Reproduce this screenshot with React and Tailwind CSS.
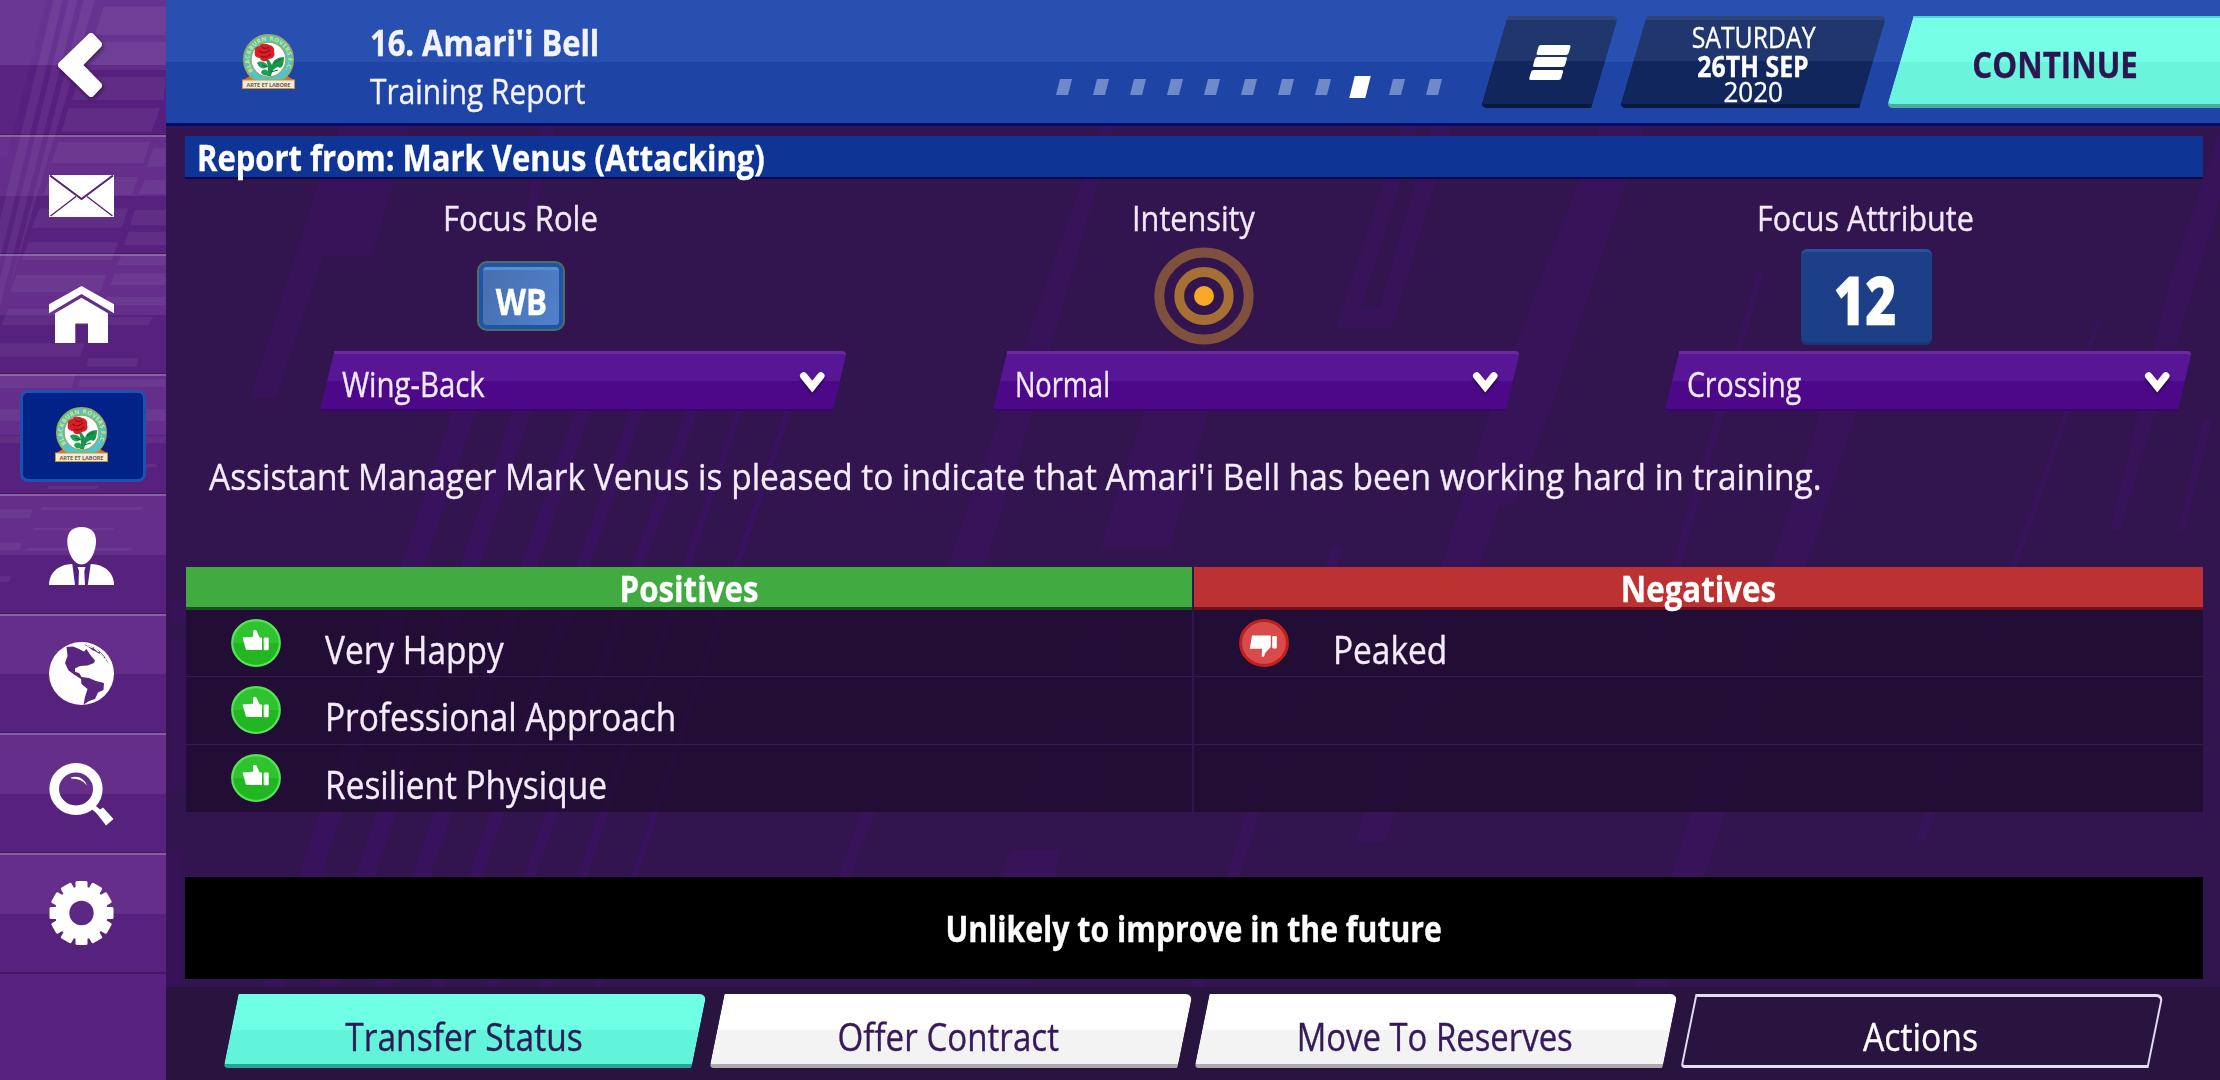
import { useId } from 'react';

const positives = ['Very Happy', 'Professional Approach', 'Resilient Physique'];
const negatives = ['Peaked', '', ''];
const pages = [0, 1, 2, 3, 4, 5, 6, 7, 8, 9, 10];
const activePage = 8;

const Crest = () => {
  const ringId = useId();
  return (
    <svg width="53" height="55" viewBox="0 0 53 55" className="overflow-visible">
      <path d="M1 46 L8 42 H45 L52 46 Z" fill="#e0662c" />
      <circle cx="26.5" cy="25.5" r="24.8" fill="#4fc4cf" stroke="#a9a45a" strokeWidth="1.4" />
      <circle cx="26.5" cy="25.5" r="17.4" fill="#fdfdfd" stroke="#9aa860" strokeWidth="1.2" />
      <path id={ringId} d="M11 37 A19.3 19 0 1 1 42 37" fill="none" />
      <text className="font-['Open_Sans'] font-bold" fontSize="6" fill="#e2e84c">
        <textPath href={`#${ringId}`} textLength="82">BLACKBURN ROVERS F.C.</textPath>
      </text>
      {/* leaves and stem */}
      <path d="M24 26 C26 31 27 36 25 42 L29 42 C30 37 32 34 36 33 C40 36 42 30 42 23 C36 23 31 26 30 31 L27 26 Z" fill="#17964e" />
      <path d="M15 29 C18 26 24 28 26 32 C23 36 17 35 15 29 Z M19 38 C21 34 26 35 27 39 C25 43 20 42 19 38 Z" fill="#1da155" />
      <path d="M32 29 L39 25 M20 31 L26 33 M29 38 L36 36" stroke="#0c6b36" strokeWidth="1" />
      {/* rose */}
      <path d="M13 17 C12 12 17 13 18 11 C21 9 25 10 27 11 C31 11 33 15 32 18 C34 22 30 25 27 25 C24 29 18 27 18 24 C13 24 12 20 13 17 Z" fill="#d81f26" />
      <path d="M17 17 Q22 21 28 16 M19 22 Q24 25 29 20 M20 13 Q24 16 27 13" stroke="#8e1118" strokeWidth="1.1" fill="none" />
      <rect x="0.5" y="46" width="52" height="8.5" fill="#f4ecd8" stroke="#c9962f" />
      <text x="26.5" y="52.5" textAnchor="middle" textLength="44" className="font-['Open_Sans'] font-bold" fontSize="5.6" fill="#6c6158">ARTE ET LABORE</text>
    </svg>
  );
};

const BackIcon = () => (
  <svg width="44" height="64" viewBox="0 0 44 64" className="drop-shadow-[1px_2px_2px_rgba(30,0,50,0.6)] overflow-visible">
    <path d="M33 3.5 L40.5 11.5 L20.5 32 L40.5 52.5 L33 60.5 L3.5 32 Z" fill="white" stroke="white" strokeWidth="7" strokeLinejoin="round" />
  </svg>
);

const MailIcon = () => (
  <svg width="65" height="42" viewBox="0 0 65 42">
    <rect width="65" height="42" fill="white" />
    <path d="M1 0.5 L32.5 24 L64 0.5" fill="none" stroke="#57227e" strokeWidth="2" />
    <path d="M1.5 41 L27 21.5 M63.5 41 L38 21.5" stroke="#57227e" strokeWidth="1.4" />
  </svg>
);

const HomeIcon = () => (
  <svg width="65" height="57" viewBox="0 0 65 57" fill="white">
    <path d="M32.5 0 L65 18.3 V27.3 L32.5 8 L0 27.3 V18.3 Z" />
    <path d="M32.5 11.7 L59 27.3 V57 H39 V37.5 H26.3 V57 H6 V27.3 Z" />
  </svg>
);

const ManagerIcon = () => (
  <svg width="65" height="58" viewBox="0 0 65 58" fill="white">
    <path d="M32.5 0 C42 0 47 5.5 47 14 C47 25 40.5 37.5 32.5 37.5 C24.5 37.5 18.3 25 18.3 14 C18.3 5.5 23 0 32.5 0 Z" />
    <path d="M23.3 37 L26 58 H0 C0 46 9 37.5 23.3 37 Z" />
    <path d="M41.7 37 L38.8 58 H65 C65 46 56 37.5 41.7 37 Z" />
    <path d="M28.5 40 H36.5 L35.3 44 L36 58 H29.5 L30 44 Z" />
  </svg>
);

const GlobeIcon = () => (
  <svg width="65" height="63" viewBox="0 0 65 63">
    <ellipse cx="32.5" cy="31.5" rx="32.5" ry="31.5" fill="white" />
    <path
      d="M17.5 5 L24 4.5 L29 6.5 L35 9.5 L37.5 7 L41 12.5 L46 18.5 L45 21 L38.5 23.5 L31 24 L26 26.5 L26 29.5 L30.5 31.5 L32.5 35 L40 36 L47 39 L55 41 L54.5 48 L49 50.5 L46 57 L40 59 L34.5 62.8 L36 55 L38.5 47 L32.5 42 L32 37 L25 32.5 L19.5 28.5 L16 21 L18.5 14 Z"
      fill="#5a2580"
    />
    <path d="M35 2.5 C45 4 54 9 60.5 23 C55 14 48 9.5 44 8.5 L38 4 Z" fill="#5a2580" />
    <path d="M38 3.5 L45 6 L50 10 L57 18" fill="none" stroke="white" strokeWidth="1.3" strokeDasharray="6 1.5" />
  </svg>
);

const SearchIcon = () => (
  <svg width="65" height="63" viewBox="0 0 65 63">
    <ellipse cx="27" cy="26" rx="21.8" ry="21.2" fill="none" stroke="white" strokeWidth="9.6" />
    <path d="M22 14.5 Q33 11.5 38 22.5 Q33 15.5 22 15.5 Z" fill="white" />
    <path d="M43 43 L50 49" stroke="white" strokeWidth="5" />
    <path d="M47 49.5 L54 44.5 L64.5 56 L57 62.5 Z" fill="white" />
  </svg>
);

const GearIcon = () => (
  <svg width="65" height="64" viewBox="0 0 65 64">
    <g fill="white">
      {[0, 30, 60, 90, 120, 150].map((deg) => (
        <rect key={deg} x="26.5" y="0" width="12" height="64" rx="1.5" transform={`rotate(${deg} 32.5 32)`} />
      ))}
      <circle cx="32.5" cy="32" r="26.5" />
    </g>
    <circle cx="32.5" cy="32" r="12.2" fill="#5c2884" />
  </svg>
);

const ThumbUp = () => (
  <svg width="50" height="48" viewBox="0 0 50 48">
    <ellipse cx="25" cy="24" rx="23.8" ry="22.8" fill="#2fc42f" stroke="#57e357" strokeWidth="2.2" />
    <path d="M2.5 24 A22.5 21.7 0 0 0 47.5 24 Z" fill="#22b722" />
    <path d="M11.5 18.5 L22 17.8 L22.3 11.3 L25 10.8 L28.5 18.2 L31 18.7 V31 L15 30.7 Z" fill="white" />
    <rect x="32.7" y="18.5" width="5" height="12.7" rx="1.2" fill="white" />
  </svg>
);

const ThumbDown = () => (
  <svg width="50" height="48" viewBox="0 0 50 48">
    <ellipse cx="25" cy="24" rx="23.4" ry="22.4" fill="#d94a4a" stroke="#c01f1f" strokeWidth="3" />
    <path d="M13 16.4 H31.8 V28 L26.5 33.5 L24.8 37.8 H22.8 L23 29.8 H10.8 Z" fill="white" />
    <rect x="33.2" y="17" width="4.6" height="12.5" rx="1.2" fill="white" />
  </svg>
);

const SideStripes = () => (
  <svg className="absolute inset-0" width="166" height="1080" viewBox="0 0 498 3240" fill="white" fillOpacity="0.055">
    <path d="M160 0 H188 L0 780 V660 Z M205 0 H232 L0 920 V840 Z M250 0 H285 L60 760 L20 900 Z" />
    <path d="M0 0 H140 L20 470 H0 Z" fillOpacity="0.025" />
    <path d="M310 20 H498 V105 H285 Z M275 125 H498 V210 H250 Z M240 230 H498 L490 300 H215 Z M205 325 H480 L455 395 H185 Z" />
    <path d="M175 425 H450 L430 490 H155 Z M150 530 H415 L395 585 H130 Z M120 625 H385 L365 683 H95 Z M85 727 H355 L335 780 H65 Z" />
    <path d="M50 825 H320 L300 877 H30 Z M25 927 H280 L270 975 H5 Z M0 1030 H255 L240 1070 H0 Z M265 1075 H415 L410 1100 H260 Z" />
    <path d="M460 445 H498 V500 H440 Z M435 540 H498 V582 H415 Z M405 630 H498 V675 H390 Z M385 695 H498 V735 H372 Z M365 765 H498 V795 H350 Z M345 820 H498 V855 H330 Z M320 890 H498 V915 H310 Z M300 950 H460 L445 975 H290 Z" />
    <path d="M0 1125 H225 L215 1165 H0 Z M240 1138 H498 V1160 H235 Z M0 1228 H498 V1262 H0 Z M0 1308 H498 V1330 H0 Z M145 1457 H300 L290 1467 H140 Z M430 1392 H470 V1402 H430 Z" />
    <path d="M0 1528 H98 L90 1555 H0 Z M125 1520 H430 L425 1530 H120 Z M105 1583 H340 V1590 H100 Z M0 1628 H65 L60 1650 H0 Z M85 1644 H395 V1652 H80 Z M0 1728 H32 L28 1746 H0 Z" />
  </svg>
);

const PageStripes = () => (
  <svg className="absolute inset-0" width="2220" height="1080" viewBox="0 0 2220 1080" fill="#3a125f" fillOpacity="0.65">
    {/* fan of thin diagonals */}
    <path fillOpacity="0.9" d="M456 400 H480 L284 987 H262 Z M516 400 H535 L338 987 H318 Z M579 400 H595 L392 987 H373 Z M634 400 H647 L444 987 H430 Z M690 400 H702 L497 987 H485 Z M739 400 H746 L551 987 H540 Z M788 400 H795 L601 987 H595 Z" />
    <path d="M340 126 H410 L372 256 H323 L276 398 H250 L320 178 Z M541 126 H556 L532 225 H524 Z" />
    <path d="M1101 126 H1114 L1033 411 L985 565 H948 Z M1144 411 H1209 L1170 548 H1100 Z" />
    <path fillRule="evenodd" d="M1402 126 H1452 L1392 328 H1336 Z M1418 126 H1432 L1379 309 H1361 Z" />
    <path d="M1600 126 H1645 L1550 411 L1515 505 H1500 L1385 842 H1355 L1490 411 Z" />
    <path d="M1758 270 H1765 L1660 640 H1650 Z M1828 390 H1864 L1700 890 L1668 987 H1635 Z M2096 320 H2101 L1925 842 H1915 Z M2170 280 L2220 130 V200 L2120 530 H2110 Z M2203 420 H2212 L2185 530 H2178 Z" />
    <path d="M1332 546 H1343 L1205 987 H1190 Z M1090 610 H1120 L1110 690 H1055 Z M1055 720 H1110 L1095 812 H1020 Z M1010 850 H1060 L1055 877 H1000 Z M870 790 H885 L850 877 H838 Z" />
    <path d="M170 600 H205 V625 H170 Z M170 640 H190 V790 H170 Z M166 850 H182 V987 H166 Z M960 979 H1030 V987 H955 Z" fillOpacity="0.5" />
  </svg>
);

const SideItem = () => (
  <div className="h-[119.8px] border-t-2 border-t-[#8560a3] bg-[linear-gradient(#642e8a_50%,#57227e_50%)] shadow-[inset_0_-1px_0_#43185f]" />
);

const Sidebar = () => (
  <div className="relative w-[166px] h-full bg-[#57227e] shrink-0">
    <div className="h-[134.5px] bg-[linear-gradient(#673390_48%,#57207e_48%)] shadow-[inset_0_-1px_0_#43185f]" />
    <SideItem /><SideItem /><SideItem /><SideItem /><SideItem /><SideItem /><SideItem />
    <div className="h-[107px] border-t border-t-[#43185f] bg-[#572280]" />
    <SideStripes />
    {/* icon layer sits over the stripes */}
    <div className="absolute inset-0 flex flex-col">
      <div className="h-[134.5px] flex items-center justify-center pr-[6px] pb-[5px]"><BackIcon /></div>
      <div className="h-[119.8px] flex items-center justify-center pr-[3px] pt-[4px]"><MailIcon /></div>
      <div className="h-[119.8px] flex items-center justify-center pr-[3px]"><HomeIcon /></div>
      <div className="h-[119.8px] flex items-center justify-center pt-[4px]">
        <div className="w-[126px] h-[92px] flex items-center justify-center pb-[3px] pr-[4px] rounded-[8px] border-[3px] border-[#1f4fb0] bg-[#022287]">
          <Crest />
        </div>
      </div>
      <div className="h-[119.8px] flex items-center justify-center pr-[3px] pt-[4px]"><ManagerIcon /></div>
      <div className="h-[119.8px] flex items-center justify-center pr-[3px]"><GlobeIcon /></div>
      <div className="h-[119.8px] flex items-center justify-center pr-[3px] pt-[2px]"><SearchIcon /></div>
      <div className="h-[119.8px] flex items-center justify-center pr-[3px]"><GearIcon /></div>
    </div>
  </div>
);

const Header = () => (
  <div className="h-[126px] shrink-0 flex border-b-[3px] border-b-[#07086c] bg-[linear-gradient(#2850b0_61.5px,#1e45a6_61.5px)] overflow-hidden">
    <div className="w-[204px] pl-[76px] pt-[34px]"><Crest /></div>
    <div className="w-[680px] pt-[19px] whitespace-nowrap text-[#f3f3fb]">
      <div className="text-[35px] leading-[48px] font-bold origin-left scale-x-[0.882]">16. Amari'i Bell</div>
      <div className="text-[34px] leading-[48px] origin-left scale-x-[0.879]">Training Report</div>
    </div>
    <div className="flex gap-[25px] h-[22px] mt-[76px] ml-[8px] items-center">
      {pages.map((p) => (
        <div key={p} className={p === activePage ? 'w-[16px] h-[22px] -mx-[2px] -skew-x-[14deg] bg-white' : 'w-[12px] h-[16px] -skew-x-[14deg] bg-[#7089c9]'} />
      ))}
    </div>
    <div className="flex mt-[16px] h-[92px] ml-auto">
      <div className="w-[111px] -skew-x-[16.4deg] rounded-tr-[6px] rounded-bl-[6px] border-t-4 border-t-[#2e4578] border-b-4 border-b-[#091843] bg-[linear-gradient(#20366c_49%,#11265c_49%)] flex flex-col items-center justify-center gap-[2.5px]">
        <div className="w-[32px] h-[10px] rounded-[2px] bg-white" />
        <div className="w-[32px] h-[10px] rounded-[2px] bg-white" />
        <div className="w-[32px] h-[10px] rounded-[2px] bg-white" />
      </div>
      <div className="w-[240px] ml-[28px] -skew-x-[16.4deg] rounded-tr-[6px] rounded-bl-[6px] border-t-4 border-t-[#2e4578] border-b-4 border-b-[#091843] bg-[linear-gradient(#20366c_49%,#11265c_49%)]">
        <div className="skew-x-[16.4deg] flex flex-col items-center text-white">
          <div className="h-[29px] mt-[2px] text-[29px] leading-[29px] scale-x-[0.855]">SATURDAY</div>
          <div className="h-[26px] text-[28px] leading-[31px] font-bold scale-x-[0.886]">26TH SEP</div>
          <div className="h-[26px] text-[28px] leading-[28px] scale-x-[0.93]">2020</div>
        </div>
      </div>
      <div className="w-[346px] ml-[27px] -mr-[26px] -skew-x-[16.4deg] rounded-bl-[6px] border-b-4 border-b-[#4cac9f] bg-[linear-gradient(#76ffe6_52%,#6af4dc_52%)] shadow-[inset_0_2px_0_#55d8cf]">
        <div className="skew-x-[16.4deg] h-[88px] pt-[9px] pr-[38px] flex items-center justify-center text-[35px] leading-[40px] font-bold text-[#2d1550]">
          <span className="scale-x-[0.895]">CONTINUE</span>
        </div>
      </div>
    </div>
  </div>
);

const Dropdown = ({ value, squash }) => (
  <div className="ml-[142px] mr-[18px] mt-[5px] h-[60px] -skew-x-[13.4deg] rounded-tr-[5px] rounded-bl-[3px] border-t-[3px] border-t-[#672a9f] border-b-2 border-b-[#35086a] bg-[linear-gradient(#581596_50%,#4c0888_50%)] flex items-center justify-between pl-[15px] pr-[15px]">
    <span className="skew-x-[13.4deg] pt-[5px]">
      <span className={`inline-block origin-left text-[34px] leading-[40px] text-[#f1e9f8] ${squash}`}>{value}</span>
    </span>
    <svg width="25" height="22" viewBox="0 0 25 22" className="skew-x-[13.4deg] overflow-visible drop-shadow-[0_2px_1px_rgba(30,0,60,0.7)]">
      <path d="M4 5 L12.5 15.5 L21 5" fill="none" stroke="white" strokeWidth="7.5" strokeLinecap="round" />
    </svg>
  </div>
);

const Focus = ({ label, squash, children, value, valueSquash }) => (
  <div className="flex flex-col">
    <div className={`mt-[20px] h-[38px] pr-[2px] text-center text-[35px] leading-[38px] text-[#f1e9f8] ${squash}`}>{label}</div>
    <div className="mt-[9px] h-[100px] flex items-center justify-center">{children}</div>
    <Dropdown value={value} squash={valueSquash} />
  </div>
);

const TraitList = ({ title, rows, icon, head, size }) => (
  <div className={`flex flex-col ${size}`}>
    <div className={`h-[43px] border-b-[3px] text-center text-[36px] leading-[43px] font-bold text-white ${head}`}>
      <span className="inline-block scale-x-[0.868]">{title}</span>
    </div>
    {rows.map((row, i) => (
      <div key={i} className="h-[67.3px] flex items-center pl-[44.5px] bg-[#1b0b2a]/70 border-b border-b-[#361a56] last:border-b-0">
        {row && (
          <>
            {icon}
            <span className="ml-[44.5px] pt-[11px] text-[39px] leading-[46px] origin-left scale-x-[0.857] text-[#f4ecfa]">{row}</span>
          </>
        )}
      </div>
    ))}
  </div>
);

const FooterButton = ({ label, look, squash }) => (
  <div className={`w-[468px] h-[74px] -skew-x-[11.5deg] rounded-tr-[7px] rounded-bl-[4px] flex items-center justify-center ${look}`}>
    <span className="skew-x-[11.5deg]">
      <span className={`inline-block text-[39px] leading-[46px] ${squash}`}>{label}</span>
    </span>
  </div>
);

const App = () => {
  return (
    <div className="w-[2220px] h-[1080px] flex overflow-hidden bg-[#32144f] font-['Open_Sans','Noto_Sans',sans-serif] [-webkit-text-stroke:0.35px] relative">
      <PageStripes />
      <Sidebar />
      <div className="relative flex-1 flex flex-col min-w-0">
        <Header />

        <div className="h-[861px] pt-[10px] pl-[19px] pr-[17px] flex flex-col">
          <div className="h-[43px] shrink-0 pl-[12px] border-b-2 border-b-[#060a52] bg-[#0e3596] text-[35px] leading-[43px] font-bold text-white whitespace-nowrap">
            <span className="inline-block origin-left scale-x-[0.885]">Report from: Mark Venus (Attacking)</span>
          </div>

          <div className="grid grid-cols-3">
            <Focus label="Focus Role" squash="scale-x-[0.89]" value="Wing-Back" valueSquash="scale-x-[0.865]">
              <div className="w-[88px] h-[70px] rounded-[10px] border-2 border-[#4f6f62] bg-[#1f55a8] p-[4px]">
                <div className="h-full rounded-[4px] border-t-[3px] border-t-[#5d8ed4] bg-[linear-gradient(115deg,#476fae,#5081cb)] flex items-center justify-center text-white text-[36px] leading-[40px] font-bold pt-[8px]">
                  <span className="scale-x-[0.87]">WB</span>
                </div>
              </div>
            </Focus>
            <Focus label="Intensity" squash="scale-x-[0.875]" value="Normal" valueSquash="scale-x-[0.8]">
              <svg width="100" height="98" viewBox="0 0 100 98" className="ml-[21px]" fill="none">
                <ellipse cx="50" cy="49" rx="44.7" ry="43.5" stroke="#80503f" strokeWidth="9.8" />
                <ellipse cx="50" cy="49" rx="24.8" ry="24" stroke="#a66f33" strokeWidth="9.8" />
                <ellipse cx="50" cy="49" rx="10" ry="10" fill="#f8a726" />
              </svg>
            </Focus>
            <Focus label="Focus Attribute" squash="scale-x-[0.873]" value="Crossing" valueSquash="scale-x-[0.84]">
              <div className="w-[131px] h-[96px] mt-[2px] rounded-[6px] border-t-[3px] border-t-[#2850a0] border-b-[3px] border-b-[#173872] bg-[#1c3f88] flex items-center justify-center pt-[4px] pr-[3px] text-[67px] leading-[70px] font-extrabold text-white">
                <span className="scale-x-[0.8]">12</span>
              </div>
            </Focus>
          </div>

          <p className="h-[156px] shrink-0 pt-[41px] pl-[24px] text-[37px] leading-[48px] text-[#f4ecfa] whitespace-nowrap">
            <span className="inline-block origin-left scale-x-[0.904]">
              Assistant Manager Mark Venus is pleased to indicate that Amari'i Bell has been working hard in training.
            </span>
          </p>

          <div className="flex gap-[2px] pl-px shrink-0">
            <TraitList title="Positives" rows={positives} icon={<ThumbUp />} size="w-[1006px]" head="bg-[#41ab42] border-b-[#1a4f22]" />
            <TraitList title="Negatives" rows={negatives} icon={<ThumbDown />} size="flex-1" head="bg-[#bc3131] border-b-[#6b1220]" />
          </div>

          <div className="mt-[65px] h-[102px] shrink-0 bg-black flex items-center justify-center text-[35px] leading-[40px] pt-[3px] font-bold text-white">
            <span className="scale-x-[0.863]">Unlikely to improve in the future</span>
          </div>
        </div>

        <div className="h-[93px] shrink-0 pt-[7px] pl-[65px] flex gap-[17.5px] bg-[#28143f]">
          <FooterButton label="Transfer Status" squash="scale-x-[0.86]" look="pt-[13px] bg-[linear-gradient(#6effe4_51%,#62f4da_51%)] border-b-4 border-b-[#22a795] text-[#2f1a55]" />
          <FooterButton label="Offer Contract" squash="scale-x-[0.85]" look="pt-[13px] pr-[4px] bg-[linear-gradient(#ffffff_51%,#f3f3f3_51%)] border-b-4 border-b-[#adabb0] text-[#35195a]" />
          <FooterButton label="Move To Reserves" squash="scale-x-[0.843]" look="pt-[13px] bg-[linear-gradient(#ffffff_51%,#f3f3f3_51%)] border-b-4 border-b-[#adabb0] text-[#35195a]" />
          <FooterButton label="Actions" squash="scale-x-[0.865]" look="pt-[9px] border-2 border-t-[3px] border-b-[3px] border-[#e4dcf0] text-white" />
        </div>
      </div>
    </div>
  );
};

export default App;
